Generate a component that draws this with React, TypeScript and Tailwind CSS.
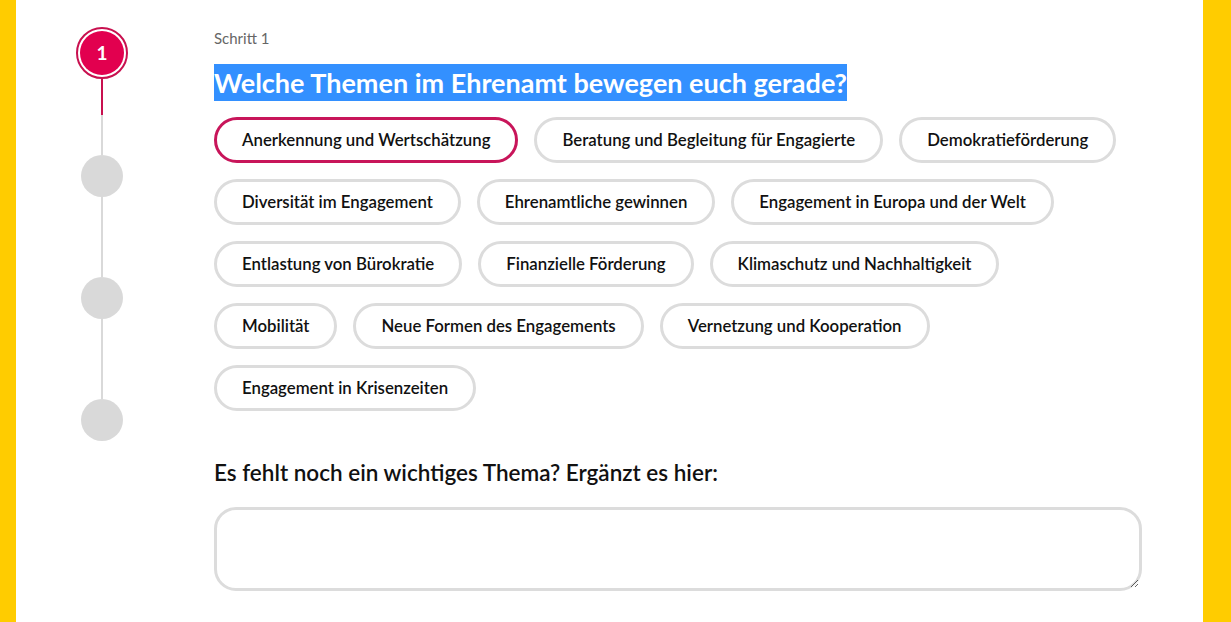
import React from "react";

const topics = [
  "Anerkennung und Wertschätzung",
  "Beratung und Begleitung für Engagierte",
  "Demokratieförderung",
  "Diversität im Engagement",
  "Ehrenamtliche gewinnen",
  "Engagement in Europa und der Welt",
  "Entlastung von Bürokratie",
  "Finanzielle Förderung",
  "Klimaschutz und Nachhaltigkeit",
  "Mobilität",
  "Neue Formen des Engagements",
  "Vernetzung und Kooperation",
  "Engagement in Krisenzeiten",
];

function Stepper() {
  return (
    <div className="flex w-[52px] shrink-0 flex-col items-center pt-[27px]">
      <div className="flex h-[52px] w-[52px] items-center justify-center rounded-full border-2 border-[#c8104f] bg-white p-[2px]">
        <div className="flex h-full w-full items-center justify-center rounded-full bg-[#e2004f] text-[19px] font-bold text-white">
          1
        </div>
      </div>
      <div className="h-[36px] w-[2px] bg-[#c8104f]" />
      <div className="h-[40px] w-[2px] bg-[#d9d9d9]" />
      <div className="h-[42px] w-[42px] rounded-full bg-[#d9d9d9]" />
      <div className="h-[80px] w-[2px] bg-[#d9d9d9]" />
      <div className="h-[42px] w-[42px] rounded-full bg-[#d9d9d9]" />
      <div className="h-[80px] w-[2px] bg-[#d9d9d9]" />
      <div className="h-[42px] w-[42px] rounded-full bg-[#d9d9d9]" />
    </div>
  );
}

function TopicPill({ label, active }: { label: string; active?: boolean }) {
  return (
    <button
      type="button"
      className={
        active
          ? "flex h-[46px] items-center rounded-full border-[3px] border-[#c8155a] bg-white px-[25px] text-[16.8px] font-semibold text-[#111]"
          : "flex h-[46px] items-center rounded-full border-[3px] border-[#dcdcdc] bg-white px-[25px] text-[16.8px] font-semibold text-[#111]"
      }
    >
      {label}
    </button>
  );
}

export default function App() {
  return (
    <div
      className="flex h-screen w-full overflow-hidden bg-[#ffcc00]"
      style={{ fontFamily: "Lato, 'Open Sans', sans-serif" }}
    >
      <div className="w-[16px] shrink-0" />
      <main className="flex flex-1 bg-white pl-[60px] pr-[61px]">
        <Stepper />
        <div className="ml-[86px] flex flex-1 flex-col pt-[29px]">
          <p className="text-[15px] leading-[18px] text-[#666]">Schritt 1</p>
          <h1 className="mt-[17px] text-[27px] font-bold leading-[37px]">
            <span className="bg-[#3390ff] py-[2px] text-white">
              Welche Themen im Ehrenamt bewegen euch gerade?
            </span>
          </h1>
          <div className="mt-[16px] flex flex-wrap gap-4 pr-[14px]">
            {topics.map((t, i) => (
              <TopicPill key={t} label={t} active={i === 0} />
            ))}
          </div>
          <h2 className="mt-[47px] text-[22.5px] font-semibold leading-[30px] text-[#111]">
            Es fehlt noch ein wichtiges Thema? Ergänzt es hier:
          </h2>
          <textarea className="mt-[19px] h-[84px] w-full rounded-[22px] border-[3px] border-[#dcdcdc] bg-white px-4 py-2 outline-none" />
        </div>
      </main>
      <div className="w-[28px] shrink-0" />
    </div>
  );
}
